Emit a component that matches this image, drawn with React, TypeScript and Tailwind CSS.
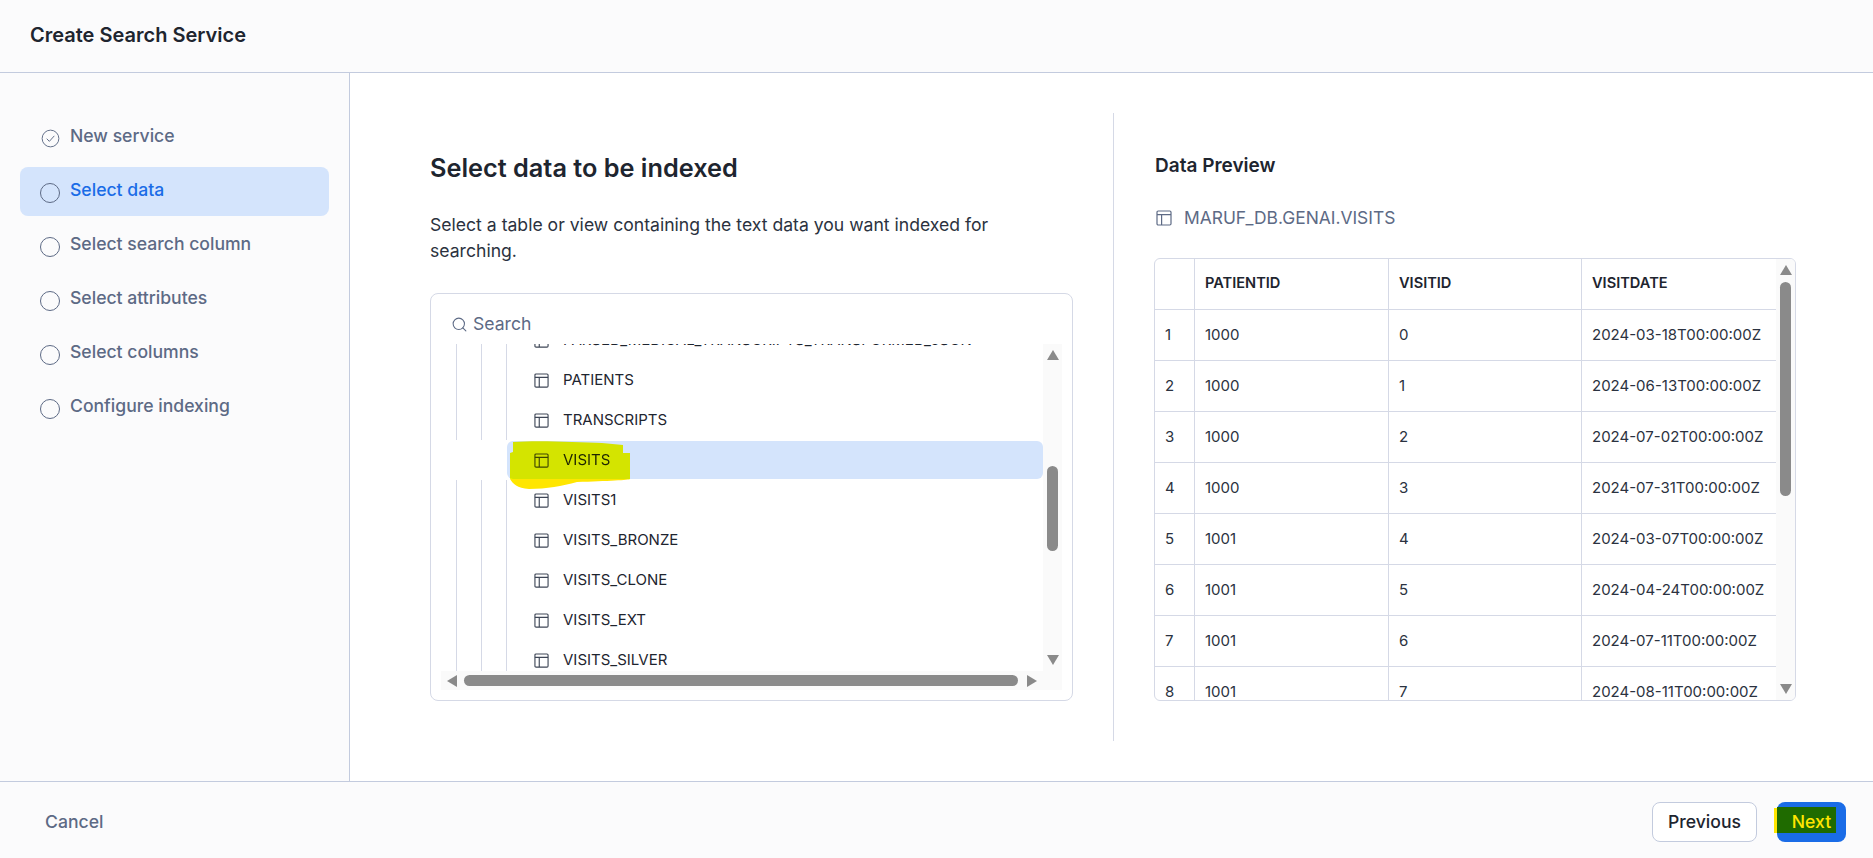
import { Search } from 'lucide-react';

const steps = ['New service', 'Select data', 'Select search column', 'Select attributes', 'Select columns', 'Configure indexing'];

const tables = ['PATIENTS', 'TRANSCRIPTS', 'VISITS', 'VISITS1', 'VISITS_BRONZE', 'VISITS_CLONE', 'VISITS_EXT', 'VISITS_SILVER'];

const previewRows = [
  ['1', '1000', '0', '2024-03-18T00:00:00Z'],
  ['2', '1000', '1', '2024-06-13T00:00:00Z'],
  ['3', '1000', '2', '2024-07-02T00:00:00Z'],
  ['4', '1000', '3', '2024-07-31T00:00:00Z'],
  ['5', '1001', '4', '2024-03-07T00:00:00Z'],
  ['6', '1001', '5', '2024-04-24T00:00:00Z'],
  ['7', '1001', '6', '2024-07-11T00:00:00Z'],
  ['8', '1001', '7', '2024-08-11T00:00:00Z'],
];

function TableIcon({ className }: { className?: string }) {
  return (
    <svg viewBox="0 0 16 16" fill="none" stroke="currentColor" strokeWidth="1.2" className={className}>
      <rect x="1" y="1" width="14" height="14" rx="1.2" />
      <path d="M1 4.6H15M5.6 4.6V15" />
    </svg>
  );
}

function Arrow({ dir, className }: { dir: 'up' | 'down' | 'left' | 'right'; className?: string }) {
  const points = { up: '5,0 10,10 0,10', down: '0,0 10,0 5,10', left: '10,0 10,10 0,5', right: '0,0 10,5 0,10' }[dir];
  return (
    <svg viewBox="0 0 10 10" preserveAspectRatio="none" fill="#8a8a8a" className={className}>
      <polygon points={points} />
    </svg>
  );
}

function Sidebar() {
  return (
    <aside className="w-[350px] shrink-0 border-r border-[#c3cbde] bg-[#fbfbfc] pl-5 pr-[20px] pt-[40px]">
      {steps.map((step, i) => (
        <div
          key={step}
          className={`flex h-[49px] mb-[5px] items-center rounded-lg pl-[20px] text-[17.6px] font-medium leading-none ${
            i === 1 ? 'bg-[#d4e4fc] text-[#1a6ce7]' : 'text-[#5d6a85]'
          }`}
        >
          {i === 0 ? (
            <svg viewBox="0 0 20 20" fill="none" stroke="#5d6a85" className="mr-[10px] mt-[2px] ml-[1px] h-[19px] w-[19px]">
              <circle cx="10" cy="10" r="8.8" strokeWidth="1" />
              <path d="M6 10.2l2.8 2.8L14 7.2" strokeWidth="1" />
            </svg>
          ) : (
            <span className="mr-[10px] mt-[2px] h-5 w-5 rounded-full border border-[#5d6a85]" />
          )}
          <span className="-mt-[4px]">{step}</span>
        </div>
      ))}
    </aside>
  );
}

function TablePicker() {
  return (
    <div className="flex h-[408px] flex-col rounded-lg border border-[#d5d9e6] px-[10px] pb-[10px] bg-white">
      <div className="flex h-[50px] shrink-0 items-center gap-[5px] pl-[10px] pt-[10px] text-[17.6px] text-[#5d6a85]">
        <Search className="h-[17px] w-[17px]" strokeWidth={1.5} />
        Search
      </div>
      <div className="flex min-h-0 flex-1">
        <div className="relative min-w-0 flex-1 overflow-hidden">
          <div className="absolute inset-y-0 left-[15px] w-px bg-[#d5d9e6]" />
          <div className="absolute inset-y-0 left-[40px] w-px bg-[#d5d9e6]" />
          <div className="absolute inset-y-0 left-[65px] w-px bg-[#d5d9e6]" />
          <div className="ml-[66px] -mt-[24px] text-[15px] text-[#1e252f]">
            <div className="flex h-10 items-center pl-[27px]">
              <TableIcon className="mr-[14px] h-[15px] w-[15px] shrink-0 text-[#3e4656]" />
              <span className="whitespace-nowrap">PARSED_MEDICAL_TRANSCRIPTS_TRANSFORMED_JSON</span>
            </div>
            {tables.map((name) => (
              <div
                key={name}
                className={`relative flex h-10 items-center pl-[27px] ${
                  name === 'VISITS' ? 'z-10 bg-white' : ''
                }`}
              >
                {name === 'VISITS' && (
                  <>
                    <div className="absolute -left-[66px] inset-y-0 w-[66px] bg-white" />
                    <div className="absolute inset-x-0 inset-y-[1px] rounded-md bg-[#d4e4fc]" />
                  </>
                )}
                <TableIcon className="relative mr-[14px] h-[15px] w-[15px] shrink-0 text-[#3e4656]" />
                <span className="relative">{name}</span>
                {name === 'VISITS' && (
                  <svg viewBox="0 0 130 55" className="absolute left-0 top-0 h-[55px] w-[130px] mix-blend-multiply">
                    <path d="M6 2 C30 0 70 2 95 3 L116 5 L116 13 L123 13 L123 39 L3 39 L3 13 L6 12 Z" fill="#ffff00" />
                    <path d="M3 39 L123 39 C123 40 100 41 70 42 C55 46 40 49 22 49 C10 48 6 44 3 39 Z" fill="#ffe600" />
                  </svg>
                )}
              </div>
            ))}
          </div>
        </div>
        <div className="flex w-[19px] shrink-0 flex-col items-center bg-[#fafafa] py-[6px]">
          <Arrow dir="up" className="h-[10px] w-[12px]" />
          <div className="mt-[106px] h-[85px] w-[11px] rounded-full bg-[#8a8a8a]" />
          <Arrow dir="down" className="mt-auto h-[10px] w-[12px]" />
        </div>
      </div>
      <div className="flex h-[19px] shrink-0 items-center bg-[#fafafa] pl-[6px] pr-[25px]">
        <Arrow dir="left" className="h-[12px] w-[10px]" />
        <div className="ml-[7px] h-[11px] flex-1 rounded-full bg-[#8a8a8a]" />
        <Arrow dir="right" className="ml-[9px] h-[12px] w-[10px]" />
      </div>
    </div>
  );
}

function PreviewTable() {
  const cols = 'grid grid-cols-[39px_194px_193px_195px]';
  return (
    <div className="flex h-[443px] overflow-hidden rounded-md border border-[#d5d9e6] bg-white">
      <div className="min-w-0 flex-1 overflow-hidden text-[15px] text-[#2b3240]">
        <div className={`${cols} h-[51px] items-center border-b border-[#d5d9e6] font-semibold text-[#1e252f]`}>
          <div className="flex h-full items-center" />
          {['PATIENTID', 'VISITID', 'VISITDATE'].map((h) => (
            <div key={h} className="flex h-full items-center border-l border-[#d5d9e6] pl-[10px] text-[14.6px] whitespace-nowrap">
              {h}
            </div>
          ))}
        </div>
        {previewRows.map((row) => (
          <div key={row[0]} className={`${cols} h-[51px] shrink-0 items-center border-b border-[#d5d9e6]`}>
            <div className="flex h-full items-center pl-[10px]">{row[0]}</div>
            {row.slice(1).map((cell) => (
              <div key={cell} className="flex h-full items-center border-l border-[#d5d9e6] pl-[10px] whitespace-nowrap">
                {cell}
              </div>
            ))}
          </div>
        ))}
      </div>
      <div className="flex w-[19px] shrink-0 flex-col items-center bg-[#fafafa] py-[6px]">
        <Arrow dir="up" className="h-[10px] w-[12px]" />
        <div className="mt-[7px] h-[214px] w-[11px] rounded-full bg-[#8a8a8a]" />
        <Arrow dir="down" className="mt-auto h-[10px] w-[12px]" />
      </div>
    </div>
  );
}

export default function App() {
  return (
    <div className="flex h-[858px] w-[1873px] flex-col overflow-hidden bg-white font-['Inter',sans-serif]">
      <header className="flex h-[73px] shrink-0 items-center border-b border-[#c3cbde] bg-[#fbfbfc] pl-[30px]">
        <h1 className="text-[20px] font-semibold text-[#1e252f] -mt-[2px]">Create Search Service</h1>
      </header>

      <div className="flex min-h-0 flex-1">
        <Sidebar />
        <main className="flex min-w-0 flex-1 pt-[40px]">
          <section className="w-[764px] shrink-0 pl-[80px] pr-[40px] h-[628px] border-r border-[#d5d9e6]">
            <h2 className="mt-[39px] text-[25.3px] font-semibold leading-[32px] text-[#1e252f]">Select data to be indexed</h2>
            <p className="mt-[28px] text-[17.6px] leading-[26px] text-[#2b3240]">
              Select a table or view containing the text data you want indexed for searching.
            </p>
            <div className="mt-[29px]">
              <TablePicker />
            </div>
          </section>
          <section className="flex-1 pl-[40px] pr-[77px]">
            <h3 className="mt-[40px] pl-[1px] text-[19px] font-semibold leading-[26px] text-[#1e252f]">Data Preview</h3>
            <div className="mt-[26px] flex items-center gap-[12px] pl-[1px] text-[17.4px] leading-[26px] text-[#5d6a85]">
              <TableIcon className="h-[16px] w-[16px] ml-[1px]" />
              MARUF_DB.GENAI.VISITS
            </div>
            <div className="mt-[27px]">
              <PreviewTable />
            </div>
          </section>
        </main>
      </div>

      <footer className="flex h-[77px] shrink-0 items-center justify-between border-t border-[#c3cbde] bg-[#fbfbfc] pl-[45px] pr-[27px] pt-[3px]">
        <span className="pt-[1px] text-[17.6px] font-medium text-[#5d6a85]">Cancel</span>
        <div className="flex items-center gap-[20px]">
          <button className="h-10 w-[105px] rounded-lg border border-[#c3cbde] bg-white pt-[1px] text-[17.6px] font-medium text-[#1e252f]">Previous</button>
          <button className="relative h-10 w-[69px] rounded-lg bg-[#1a6ce7] pt-[1px] text-[17.6px] font-medium text-[#ffe600]">
            <span className="absolute left-[-3px] top-[6px] h-[25px] w-[3px] bg-[#ffe600]" />
            <span className="absolute left-0 top-[5px] h-[26px] w-[59px] bg-[#1f6b00]" />
            <span className="relative">Next</span>
          </button>
        </div>
      </footer>
    </div>
  );
}
